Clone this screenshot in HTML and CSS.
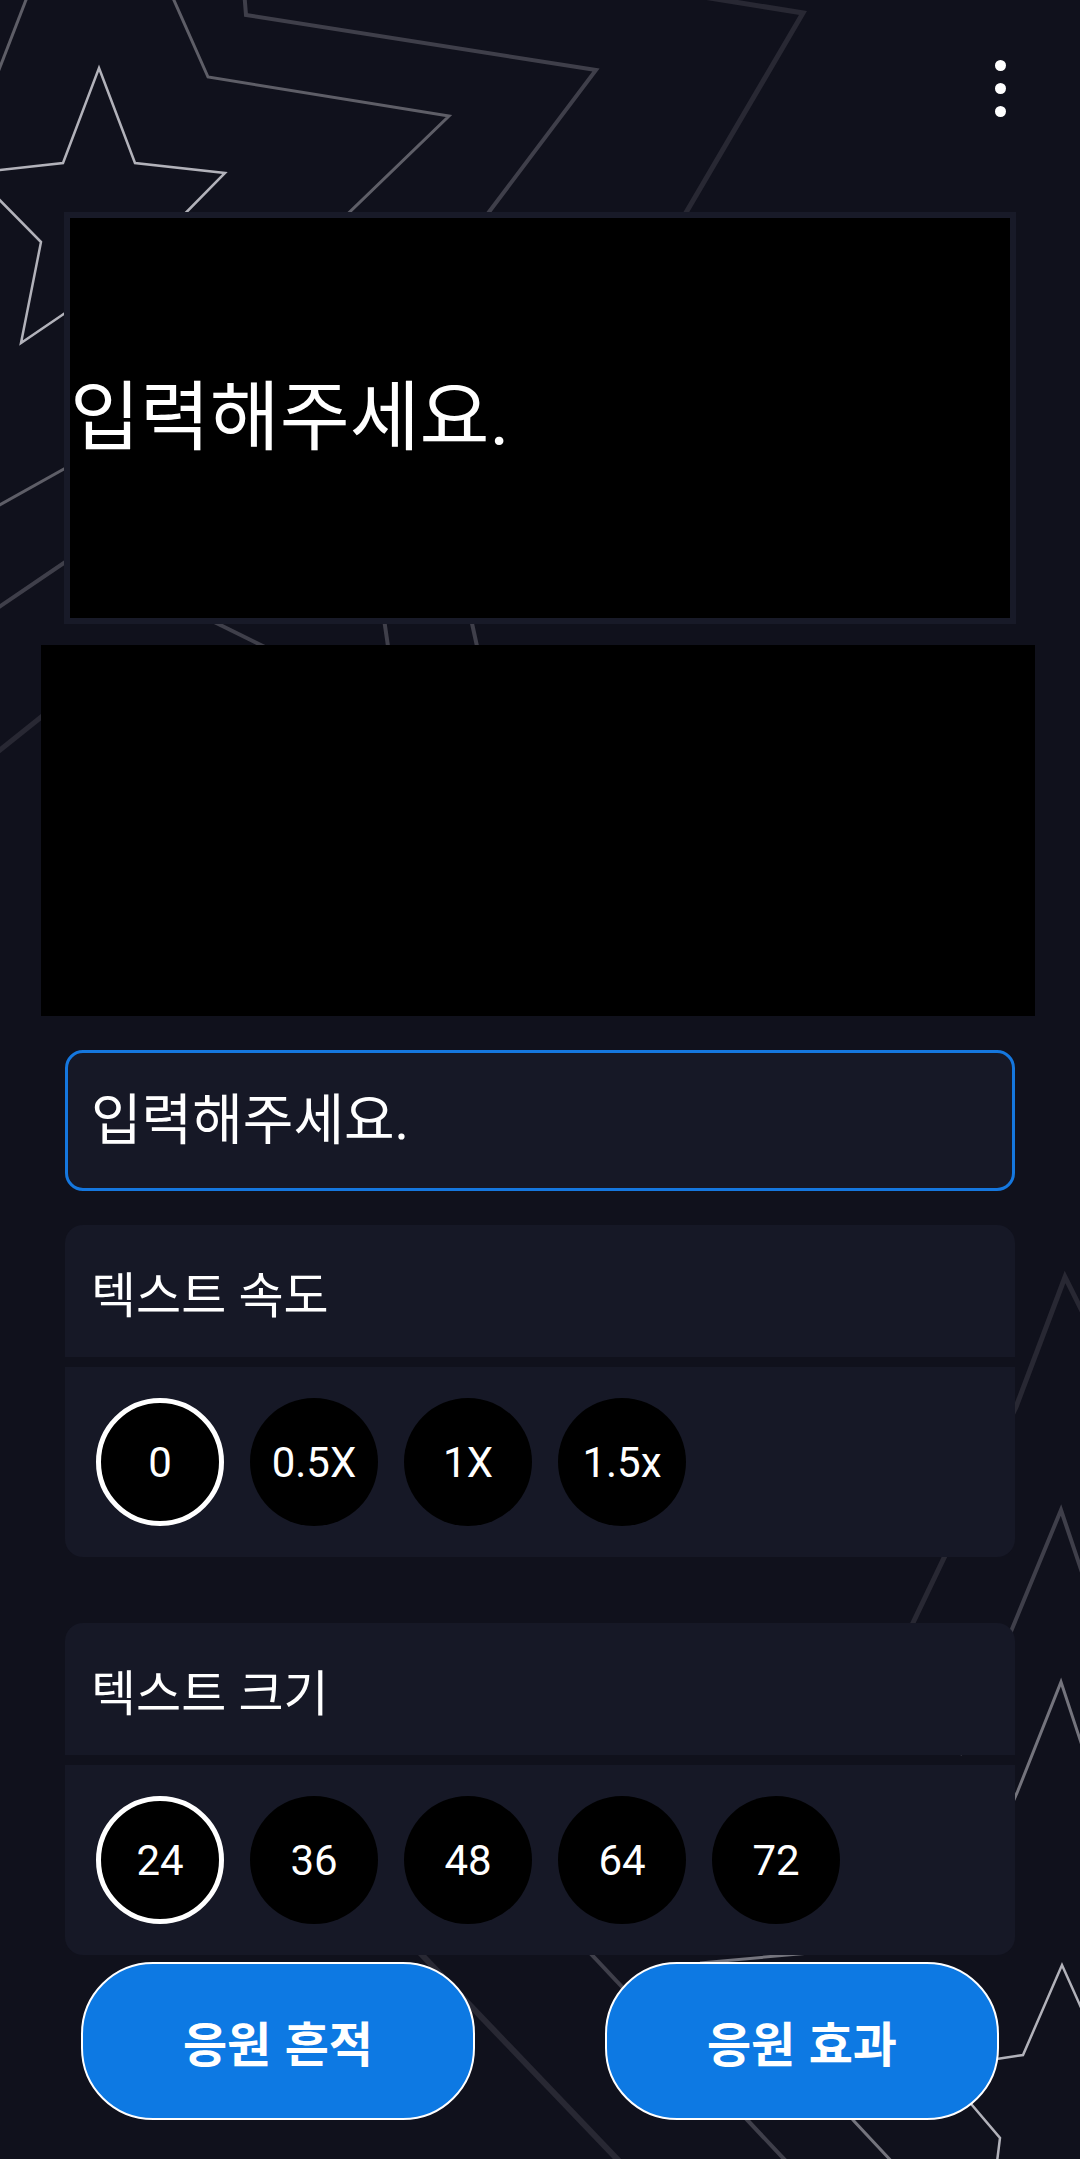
FILE: index.html
```html
<!DOCTYPE html>
<html lang="ko">
<head>
<meta charset="utf-8">
<title>응원 텍스트</title>
<link rel="stylesheet" href="styles.css">
</head>
<body>
<svg class="backdrop" viewBox="0 0 1080 2159" width="1080" height="2159" aria-hidden="true">
  <g fill="none" stroke-linejoin="miter">
    <polygon class="s-light" points="99,68 135,163 225,173 157,242 177,343 99,290 21,343 41,242 -27,173 63,163"/>
    <polyline class="s-mid" points="36,-26 -10,93"/>
    <polyline class="s-mid" points="165,-20 208,77 449,116 300,260"/>
    <polyline class="s-mid" points="-20,516 80,460"/>
    <polyline class="s-dim" points="244,-10 246,15 596,70 400,330"/>
    <polyline class="s-dim" points="-20,620 80,552"/>
    <polyline class="s-dark" points="660,-10 803,13 500,530"/>
    <polyline class="s-dark" points="-20,766 60,702"/>
    <polyline class="s-dim" points="190,610 275,652"/>
    <polyline class="s-dim" points="382,605 390,660"/>
    <polyline class="s-dim" points="468,605 480,660"/>
    <polyline class="s-dark" points="900,1650 1016,1407 1065,1277 1100,1347"/>
    <polyline class="s-dim" points="960,1755 1012,1629 1061,1510 1100,1626"/>
    <polyline class="s-grey" points="1000,1830 1017,1793 1061,1682 1100,1800"/>
    <polyline class="s-dark wide" points="380,1911 640,2183"/>
    <polyline class="s-dim" points="560,1921 800,2176"/>
    <polyline class="s-grey" points="700,1963 810,1953"/>
    <polyline class="s-grey" points="800,2050 853,2120 895,2165"/>
    <polyline class="s-light" points="1100,2050 1062,1965 1023,2055 990,2060"/>
    <polyline class="s-light" points="955,2085 1000,2138 996,2170"/>
  </g>
</svg>

<div class="screen">
  <header class="topbar">
    <div class="menu" role="button" aria-label="더보기">
      <span class="dot"></span>
      <span class="dot"></span>
      <span class="dot"></span>
    </div>
  </header>

  <section class="preview">
    <p class="preview-text">입력해주세요.</p>
  </section>

  <section class="stage"></section>

  <div class="field">
    <span class="field-text">입력해주세요.</span>
  </div>

  <section class="card">
    <div class="card-head">텍스트 속도</div>
    <div class="card-body">
      <button class="chip selected">0</button>
      <button class="chip">0.5X</button>
      <button class="chip">1X</button>
      <button class="chip">1.5x</button>
    </div>
  </section>

  <section class="card card-size">
    <div class="card-head">텍스트 크기</div>
    <div class="card-body">
      <button class="chip selected">24</button>
      <button class="chip">36</button>
      <button class="chip">48</button>
      <button class="chip">64</button>
      <button class="chip">72</button>
    </div>
  </section>

  <div class="actions">
    <button class="action">응원 흔적</button>
    <button class="action">응원 효과</button>
  </div>
</div>
</body>
</html>
```

FILE: styles.css
```css
* {
  box-sizing: border-box;
}

html, body {
  margin: 0;
  padding: 0;
}

body {
  width: 1080px;
  height: 2159px;
  position: relative;
  overflow: hidden;
  background: #10111c;
  color: #ffffff;
  font-family: Roboto, "Noto Sans CJK KR", "Noto Sans", sans-serif;
}

.backdrop {
  position: absolute;
  left: 0;
  top: 0;
  z-index: 0;
}

.s-light { stroke: #b2b2ba; stroke-width: 2.5; }
.s-grey  { stroke: #74747d; stroke-width: 3; }
.s-mid   { stroke: #5e5e67; stroke-width: 3; }
.s-dim   { stroke: #3f3f4a; stroke-width: 4; }
.s-dark  { stroke: #282833; stroke-width: 5; }
.wide    { stroke-width: 6; }

.screen {
  position: relative;
  z-index: 1;
  display: flex;
  flex-direction: column;
}

/* top bar */
.topbar {
  height: 212px;
  display: flex;
  justify-content: flex-end;
  align-items: flex-start;
  padding: 60px 74px 0 0;
}

.menu {
  display: flex;
  flex-direction: column;
  gap: 12px;
}

.dot {
  width: 11px;
  height: 11px;
  border-radius: 50%;
  background: #ffffff;
}

/* preview */
.preview {
  margin-left: 64px;
  width: 952px;
  height: 412px;
  background: #000000;
  border: 6px solid #181a28;
  display: flex;
  align-items: center;
}

.preview-text {
  margin: 0;
  font-size: 76px;
  line-height: 1;
  white-space: nowrap;
}

.stage {
  margin-top: 21px;
  margin-left: 41px;
  width: 994px;
  height: 371px;
  background: #000000;
}

/* input */
.field {
  margin-top: 34px;
  margin-left: 65px;
  width: 950px;
  height: 141px;
  border: 3px solid #1577de;
  border-radius: 18px;
  background: #161826;
  display: flex;
  align-items: center;
  padding-left: 23px;
}

.field-text {
  font-size: 55px;
  line-height: 1;
}

/* option cards */
.card {
  margin-top: 34px;
  margin-left: 65px;
  width: 950px;
  display: flex;
  flex-direction: column;
  gap: 10px;
}

.card-size {
  margin-top: 66px;
}

.card-head {
  height: 132px;
  background: #161826;
  border-radius: 18px 18px 0 0;
  display: flex;
  align-items: center;
  padding-left: 26px;
  font-size: 49px;
}

.card-body {
  height: 190px;
  background: #161826;
  border-radius: 0 0 18px 18px;
  display: flex;
  align-items: center;
  gap: 26px;
  padding-left: 31px;
}

.chip {
  width: 128px;
  height: 128px;
  border-radius: 50%;
  border: none;
  background: #000000;
  color: #ffffff;
  font-family: Roboto, sans-serif;
  font-size: 42px;
  padding: 0;
  display: flex;
  align-items: center;
  justify-content: center;
}

.chip.selected {
  border: 5px solid #ffffff;
}

/* bottom actions */
.actions {
  margin-top: 7px;
  display: flex;
  justify-content: space-between;
  padding: 0 81px;
}

.action {
  width: 394px;
  height: 158px;
  border: 2px solid #ffffff;
  border-radius: 72px;
  background: #0d79e3;
  color: #ffffff;
  font-family: "Noto Sans CJK KR", sans-serif;
  font-weight: 700;
  font-size: 48px;
  padding: 0;
}
```
